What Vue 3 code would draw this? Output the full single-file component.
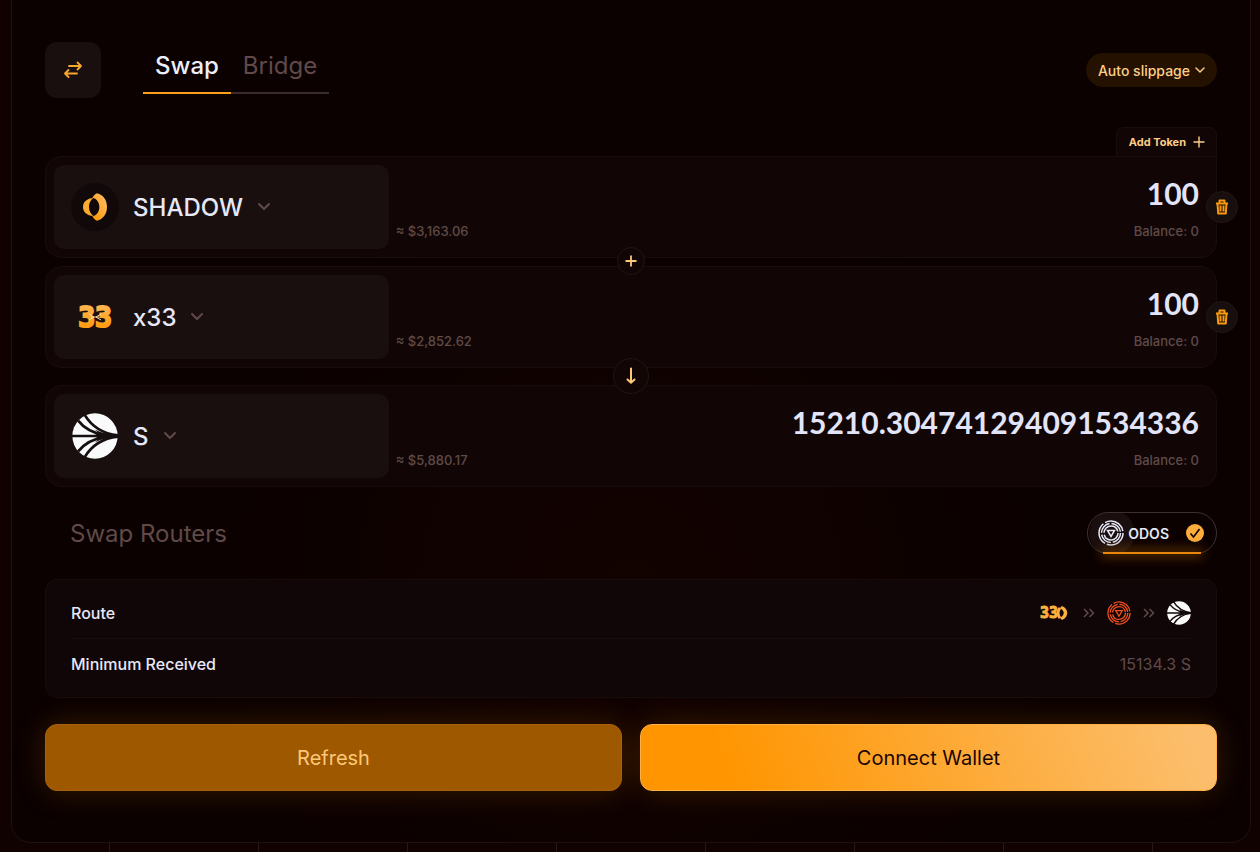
<template>
  <main class="page">
    <section class="panel">
      <header class="top">
        <button class="mode" type="button" aria-label="Switch mode">
          <svg width="20" height="20" viewBox="0 0 20 20" fill="none" stroke="#f9a82f" stroke-width="1.8" stroke-linecap="round" stroke-linejoin="round">
            <path d="M6 6h12M14.500 2.500L18 6l-3.500 3.500M14 13.500H2M5.500 10L2 13.500 5.500 17" />
          </svg>
        </button>
        <nav class="tabs">
          <button
            v-for="tab in tabs"
            :key="tab"
            type="button"
            class="tab"
            :class="{ active: tab === activeTab }"
            @click="activeTab = tab"
          >{{ tab }}</button>
        </nav>
        <button class="slippage" type="button">
          Auto slippage
          <svg width="10" height="10" viewBox="0 0 10 10" fill="none" stroke="currentColor" stroke-width="1.5" stroke-linecap="round" stroke-linejoin="round"><path d="M1 3l4 4 4-4" /></svg>
        </button>
      </header>

      <div class="add-row">
        <button class="add-token" type="button">
          Add Token
          <svg width="12" height="12" viewBox="0 0 12 12" stroke="currentColor" stroke-width="1.4" stroke-linecap="round"><path d="M6 1v10M1 6h10" /></svg>
        </button>
      </div>

      <div class="tokens">
        <article v-for="(token, i) in tokens" :key="token.symbol" class="token" :class="{ output: token.output }">
          <button class="select" type="button">
            <span class="logo" :class="token.logo">
              <svg v-if="token.logo === 'shadow'" width="24" height="28" viewBox="0 0 72 82">
                <defs>
                  <linearGradient id="shadow-fill" x1="0" y1="1" x2="1" y2="0">
                    <stop offset="0" stop-color="#ff9500" />
                    <stop offset="1" stop-color="#fdc06b" />
                  </linearGradient>
                </defs>
                <path fill="#fbab32" d="M31 14C12 15 0 26 0 41s12 26 31 27c-9-7-13-16-13-27s4-20 13-27z" />
                <path fill="url(#shadow-fill)" d="M42 0c18 4 30 20 30 41S60 78 42 82c-6-2-10-7-14-13 13-2 21-14 21-28S41 15 28 13c4-6 8-11 14-13z" />
              </svg>
              <svg v-else-if="token.logo === 'x33'" width="48" height="48" viewBox="0 0 48 48">
                <defs>
                  <linearGradient id="x33-fill" x1="0" y1="0" x2="0" y2="1">
                    <stop offset="0" stop-color="#fdba5c" />
                    <stop offset="1" stop-color="#ff9500" />
                  </linearGradient>
                </defs>
                <text x="24" y="34" text-anchor="middle" class="pixel-text" fill="url(#x33-fill)" stroke="url(#x33-fill)">33</text>
                <path d="M18 21l5 3-5 3M30 21l-5 3 5 3M20 24h8" fill="none" stroke="#ffd99c" stroke-width="1" />
              </svg>
              <svg v-else width="46" height="46" viewBox="0 0 134 134">
                <circle cx="67" cy="67" r="66" fill="#fafafa" />
                <path :d="sonicLines" fill="none" stroke="#150f10" stroke-width="8" />
                <path :d="sonicTip" fill="#150f10" />
              </svg>
            </span>
            <span class="symbol">{{ token.symbol }}</span>
            <svg class="chevron" width="14" height="10" viewBox="0 0 14 10" fill="none" stroke="currentColor" stroke-width="2" stroke-linecap="round" stroke-linejoin="round"><path d="M2 2l5 5 5-5" /></svg>
          </button>
          <span class="usd">≈ {{ token.usd }}</span>
          <div class="value">
            <input v-model="token.amount" class="amount" type="text" :readonly="token.output" :aria-label="token.symbol + ' amount'" />
            <span class="balance">Balance: 0</span>
          </div>
          <button v-if="!token.output" class="round trash" type="button" :aria-label="'Remove ' + token.symbol">
            <svg width="14" height="16" viewBox="0 0 14 16" fill="none" stroke="#f99a0c" stroke-width="2" stroke-linejoin="round">
              <path d="M1 4.500h12M4.500 4V1.500h5V4M2.500 4.500l.7 10h7.600l.7-10M5.500 6.500v6M8.500 6.500v6" />
            </svg>
          </button>
          <span v-if="i === 0" class="round plus">
            <svg width="12" height="12" viewBox="0 0 12 12" stroke="#fdc877" stroke-width="1.800"><path d="M6 .5v11M.5 6h11" /></svg>
          </span>
          <button v-if="token.output" class="round arrow" type="button" aria-label="Reverse tokens">
            <svg width="12" height="18" viewBox="0 0 12 18" fill="none" stroke="#fdc877" stroke-width="2" stroke-linecap="round" stroke-linejoin="round"><path d="M6 1.500v14M2.500 12.500L6 15.700l3.500-3.200" /></svg>
          </button>
        </article>
      </div>

      <div class="routers">
        <h2>Swap Routers</h2>
        <button class="router" type="button">
          <svg class="odos" width="26" height="26" viewBox="0 0 26 26" fill="none" stroke="currentColor" stroke-width="1.500">
            <circle cx="13" cy="13" r="12" stroke-dasharray="23 2" />
            <circle cx="13" cy="13" r="9.500" stroke-dasharray="13 2" />
            <circle cx="13" cy="13" r="7" stroke-dasharray="20 2" />
            <path d="M9.500 10.500h7L13 16.500z" />
          </svg>
          <span>ODOS</span>
          <svg class="check" width="18" height="18" viewBox="0 0 18 18">
            <circle cx="9" cy="9" r="9" fill="#fdad3c" />
            <path d="M4.500 9.500l3 3.500L13.500 5" fill="none" stroke="#120505" stroke-width="1.700" />
          </svg>
        </button>
      </div>

      <dl class="details">
        <div class="row">
          <dt>Route</dt>
          <dd class="route">
            <svg width="32" height="24" viewBox="0 0 32 24">
              <text x="10" y="17" text-anchor="middle" class="pixel-small">33</text>
              <path fill="#fcb03f" d="M20 6c-3 3-3 9 0 12l2-2c-2-2-2-6 0-8zM23 5c7 3 7 11 0 14l-2-2c5-3 5-7 0-10z" />
            </svg>
            <svg class="step" width="12" height="10" viewBox="0 0 12 10" fill="none" stroke="currentColor" stroke-width="1.500"><path d="M1 1l4 4-4 4M6.500 1l4 4-4 4" /></svg>
            <svg width="24" height="24" viewBox="0 0 26 26" fill="none" stroke="#f0501c" stroke-width="1.400">
              <circle cx="13" cy="13" r="12" stroke-dasharray="23 2" />
              <circle cx="13" cy="13" r="9.500" stroke-dasharray="13 2" />
              <circle cx="13" cy="13" r="7" stroke-dasharray="20 2" />
              <path d="M9.500 10.500h7L13 16.500z" />
            </svg>
            <svg class="step" width="12" height="10" viewBox="0 0 12 10" fill="none" stroke="currentColor" stroke-width="1.500"><path d="M1 1l4 4-4 4M6.500 1l4 4-4 4" /></svg>
            <svg width="24" height="24" viewBox="0 0 134 134">
              <circle cx="67" cy="67" r="66" fill="#fafafa" />
              <path :d="sonicLines" fill="none" stroke="#120808" stroke-width="8" />
              <path :d="sonicTip" fill="#120808" />
            </svg>
          </dd>
        </div>
        <div class="row">
          <dt>Minimum Received</dt>
          <dd>15134.3 S</dd>
        </div>
      </dl>

      <footer class="actions">
        <button class="action refresh" type="button">Refresh</button>
        <button class="action connect" type="button">Connect Wallet</button>
      </footer>
    </section>
  </main>
</template>

<script setup>
import { ref } from 'vue'

const tabs = ['Swap', 'Bridge']
const activeTab = ref('Swap')

const tokens = ref([
  { symbol: 'SHADOW', logo: 'shadow', usd: '$3,163.06', amount: '100', output: false },
  { symbol: 'x33', logo: 'x33', usd: '$2,852.62', amount: '100', output: false },
  { symbol: 'S', logo: 'sonic', usd: '$5,880.17', amount: '15210.304741294091534336', output: true }
])

const sonicLines = 'M0 67H134M36 4C54 34 84 60 134 65M18 22C36 46 66 60 100 66M36 130C54 100 84 74 134 69M18 112C36 88 66 74 100 68'
const sonicTip = 'M66 48Q98 64 134 64v6Q98 70 66 86Q78 76 86 67Q78 58 66 48z'
</script>

<style>
body {
  margin: 0;
  background: #0b0100;
}
</style>

<style scoped>
.page {
  box-sizing: border-box;
  min-height: 100vh;
  padding: 0 9px 8px 11px;
  font-family: Inter, 'Liberation Sans', sans-serif;
  color: #e6e8f8;
  background:
    repeating-linear-gradient(90deg, transparent 0 109px, #2b1713 109px 110px, transparent 110px 149px),
    #0f0200;
}

.panel {
  box-sizing: border-box;
  padding: 42px 33px 51px;
  border: 1px solid #1d100e;
  border-top: 0;
  border-radius: 0 0 20px 20px;
  background:
    radial-gradient(circle at 50% 70%, #120200, transparent 50%),
    #0b0100;
}

button {
  padding: 0;
  border: 0;
  background: none;
  color: inherit;
  font-family: inherit;
  cursor: pointer;
}

svg {
  display: block;
  flex: none;
}

.top {
  display: flex;
  align-items: center;
  height: 56px;
}

.mode {
  display: flex;
  align-items: center;
  justify-content: center;
  width: 56px;
  height: 56px;
  border-radius: 12px;
  background: #1a0f0f;
}

.tabs {
  display: flex;
  margin-left: 42px;
}

.tab {
  padding: 4px 12px 10px;
  border-bottom: 2px solid #3c2c2b;
  color: #5f4a49;
  font-size: 24px;
  line-height: 32px;
}

.tab.active {
  border-color: #f9a11b;
  color: #eceefc;
  font-weight: 500;
}

.slippage {
  display: flex;
  align-items: center;
  gap: 5px;
  height: 34px;
  margin-left: auto;
  padding: 0 12px;
  border-radius: 17px;
  background: #241100;
  color: #fdce8a;
  font-size: 14px;
  font-weight: 500;
}

.add-row {
  display: flex;
  justify-content: flex-end;
  margin-top: 29px;
}

.add-token {
  display: flex;
  align-items: center;
  gap: 7px;
  height: 29px;
  padding: 0 11px 0 12px;
  border: 1px solid #180d0c;
  border-bottom: 0;
  border-radius: 8px 8px 0 0;
  background: #110605;
  color: #fdce8a;
  font-size: 11px;
  font-weight: 700;
}

.tokens {
  display: flex;
  flex-direction: column;
  gap: 8px;
}

.token {
  position: relative;
  box-sizing: border-box;
  display: flex;
  height: 102px;
  padding: 8px;
  border: 1px solid #180d0c;
  border-radius: 16px;
  background: #110605;
}

.token:first-child {
  border-top-right-radius: 0;
}

.token.output {
  margin-top: 9px;
}

.select {
  display: flex;
  align-items: center;
  width: 29%;
  padding-left: 17px;
  border-radius: 10px;
  background: #1a0f0f;
}

.logo {
  display: flex;
  align-items: center;
  justify-content: center;
  width: 48px;
  height: 48px;
  border-radius: 50%;
}

.logo.shadow {
  background: #110909;
}

.pixel-text {
  font-family: 'DejaVu Sans Mono', monospace;
  font-size: 28px;
  font-weight: 700;
  stroke-width: 2px;
}

.pixel-small {
  fill: #fcb03f;
  stroke: #fcb03f;
  stroke-width: 1px;
  font-family: 'DejaVu Sans Mono', monospace;
  font-size: 15px;
  font-weight: 700;
}

.symbol {
  margin: 0 14px;
  font-size: 24px;
  font-weight: 500;
}

.chevron,
.step {
  color: #5f4a49;
}

.usd {
  align-self: flex-end;
  margin: 0 0 8px 7px;
  color: #5f4a49;
  font-size: 13px;
  font-weight: 500;
  line-height: 20px;
}

.value {
  flex: 1;
  display: flex;
  flex-direction: column;
  justify-content: flex-end;
  align-items: flex-end;
  padding: 0 9px 8px;
}

.amount {
  box-sizing: border-box;
  width: 100%;
  height: 40px;
  margin-bottom: 8px;
  padding: 0;
  border: 0;
  outline: 0;
  background: none;
  color: #e2e5fa;
  font-family: Lato, sans-serif;
  font-size: 30px;
  font-weight: 700;
  text-align: right;
}

.balance {
  color: #5f4a49;
  font-size: 13px;
  font-weight: 500;
  line-height: 20px;
}

/* circles that sit on the card edges */
.round {
  position: absolute;
  box-sizing: border-box;
  display: flex;
  align-items: center;
  justify-content: center;
  border: 1px solid #221615;
  border-radius: 50%;
  background: #110605;
  z-index: 1;
}

.trash {
  top: 34px;
  right: -22px;
  width: 32px;
  height: 32px;
  background: #170e0e;
}

.plus {
  bottom: -18px;
  left: 50%;
  width: 28px;
  height: 28px;
  transform: translateX(-50%);
}

.arrow {
  top: -28px;
  left: 50%;
  width: 36px;
  height: 36px;
  transform: translateX(-50%);
}

.routers {
  display: flex;
  align-items: center;
  justify-content: space-between;
  margin-top: 25px;
  padding-left: 25px;
}

h2 {
  margin: 0;
  color: #5f4a49;
  font-size: 24px;
  font-weight: 400;
}

.router {
  position: relative;
  display: flex;
  align-items: center;
  height: 42px;
  padding: 0 12px 0 10px;
  border: 1px solid #3f302e;
  border-radius: 21px;
  background: radial-gradient(circle at 24px 50%, #1a0f0e 22px, transparent 23px);
  box-sizing: border-box;
  font-size: 14px;
  font-weight: 600;
}

.router::after {
  content: '';
  position: absolute;
  right: 15px;
  bottom: -1px;
  left: 15px;
  height: 2px;
  background: #e8870c;
  box-shadow: 0 0 12px 2px #7a4200;
}

.odos {
  margin-right: 4px;
}

.check {
  margin-left: 17px;
}

.details {
  margin: 25px 0 0;
  padding: 8px 25px;
  border: 1px solid #180d0c;
  border-radius: 12px;
  background: #110607;
}

.row {
  display: flex;
  align-items: center;
  justify-content: space-between;
  height: 50px;
  font-size: 16px;
  font-weight: 500;
}

.row + .row {
  border-top: 1px solid #180d0c;
}

dd {
  margin: 0;
  color: #5f4a49;
  font-weight: 400;
}

.route {
  display: flex;
  align-items: center;
  gap: 12px;
}

.actions {
  display: grid;
  grid-template-columns: 1fr 1fr;
  gap: 18px;
  margin-top: 26px;
}

.action {
  height: 67px;
  border-radius: 12px;
  font-size: 20px;
  box-shadow: 0 0 32px rgba(255, 149, 0, 0.18);
}

.refresh {
  border: 1px solid #a5610f;
  background: #9e5900;
  color: #fdc877;
}

.connect {
  border: 1px solid #fdb044;
  background: linear-gradient(70deg, #ff9500 15%, #fcbe6c 95%);
  color: #1a0500;
}
</style>
